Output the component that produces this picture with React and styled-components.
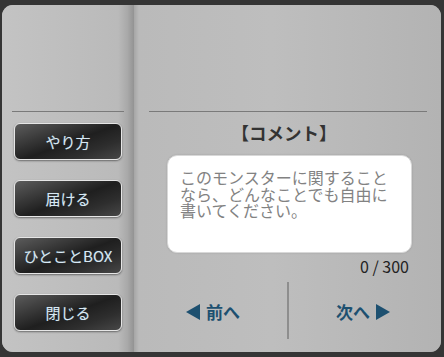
import React from "react";
import styled, { createGlobalStyle } from "styled-components";

const Global = createGlobalStyle`
  html, body { margin: 0; padding: 0; background: #353535; }
  body { font-family: "Noto Sans CJK JP", "Noto Sans", sans-serif; }
  * { box-sizing: border-box; }
`;

const Frame = styled.div`
  margin: 5px 3px 0 2px;
  width: 439px;
  height: 347px;
  border-radius: 11px;
  overflow: hidden;
  display: flex;
  background: #b8b8b8;
  box-shadow: inset -2px -3px 4px rgba(0, 0, 0, 0.22);
`;

const LeftColumn = styled.div`
  width: 132px;
  flex: none;
  padding: 106px 10px 0 10px;
  display: flex;
  flex-direction: column;
  background: linear-gradient(to right, #c3c3c3 0%, #bababa 88%, #a9a9a9 95%, #939393 100%);
`;

const RightColumn = styled.div`
  flex: 1;
  padding: 106px 14px 0 15px;
  display: flex;
  flex-direction: column;
  background: linear-gradient(to right, #a6a6a6 0px, #bababa 5px, #bebebe 45%, #b3b3b3 100%);
`;

const Rule = styled.div`
  height: 1px;
  background: #7a7a7a;
  flex: none;
`;

const ButtonStack = styled.div`
  margin-top: 11px;
  padding-left: 2px;
  display: flex;
  flex-direction: column;
  gap: 20px;
`;

const MenuButton = styled.button`
  width: 108px;
  height: 37px;
  border: 1px solid #e6e6e6;
  border-radius: 6px;
  background: linear-gradient(160deg, #5c5c5c 0%, #333 35%, #1f1f1f 52%, #2e2e2e 75%, #474747 100%);
  color: #d8e8f2;
  font-family: "Noto Sans CJK JP", sans-serif;
  font-size: 15px;
  padding: 0;
  letter-spacing: 0;
  box-shadow: 0 1px 2px rgba(0, 0, 0, 0.45);
  text-shadow: 0 0 1px rgba(120, 170, 210, 0.5);
`;

const Title = styled.div`
  margin-top: 9px;
  height: 24px;
  line-height: 24px;
  text-align: center;
  font-size: 17.5px;
  font-weight: 700;
  color: #333;
  padding-right: 8px;
`;

const CommentBox = styled.textarea`
  display: block;
  margin: 10px 0 0 18px;
  width: 245px;
  height: 98px;
  border: 1px solid #d8d8d8;
  border-radius: 10px;
  background: #fff;
  padding: 13px 12px;
  resize: none;
  outline: none;
  font-family: "Noto Sans CJK JP", sans-serif;
  font-size: 16px;
  line-height: 16.5px;
  color: #333;
  box-shadow: 0 0 2px rgba(0, 0, 0, 0.15);
  &::placeholder { color: #828282; }
`;

const Counter = styled.div`
  margin-top: 4px;
  text-align: right;
  padding-right: 18px;
  font-size: 16px;
  line-height: 19px;
  color: #222;
`;

const NavRow = styled.div`
  margin-top: 6px;
  height: 57px;
  display: flex;
  align-items: stretch;
`;

const NavButton = styled.button`
  flex: 1;
  border: none;
  background: transparent;
  display: flex;
  align-items: center;
  justify-content: center;
  gap: 6px;
  color: #1d5070;
  font-family: "Noto Sans CJK JP", sans-serif;
  font-size: 17px;
  font-weight: 700;
  padding: 2px ${(p) => (p.$side === "left" ? "10px" : "0")} 0 ${(p) => (p.$side === "right" ? "10px" : "0")};
`;

const NavDivider = styled.div`
  width: 2px;
  background: #8e8e8e;
  flex: none;
`;

const Tri = ({ dir }) => (
  <svg width="14" height="16" viewBox="0 0 14 16">
    {dir === "left" ? (
      <polygon points="14,0 14,16 0,8" fill="#1d5070" />
    ) : (
      <polygon points="0,0 0,16 14,8" fill="#1d5070" />
    )}
  </svg>
);

export default function App() {
  return (
    <>
      <Global />
      <Frame>
        <LeftColumn>
          <Rule />
          <ButtonStack>
            <MenuButton>やり方</MenuButton>
            <MenuButton>届ける</MenuButton>
            <MenuButton>ひとことBOX</MenuButton>
            <MenuButton>閉じる</MenuButton>
          </ButtonStack>
        </LeftColumn>
        <RightColumn>
          <Rule />
          <Title>【コメント】</Title>
          <CommentBox placeholder="このモンスターに関することなら、どんなことでも自由に書いてください。" />
          <Counter>0 / 300</Counter>
          <NavRow>
            <NavButton $side="left">
              <Tri dir="left" />
              前へ
            </NavButton>
            <NavDivider />
            <NavButton $side="right">
              次へ
              <Tri dir="right" />
            </NavButton>
          </NavRow>
        </RightColumn>
      </Frame>
    </>
  );
}
